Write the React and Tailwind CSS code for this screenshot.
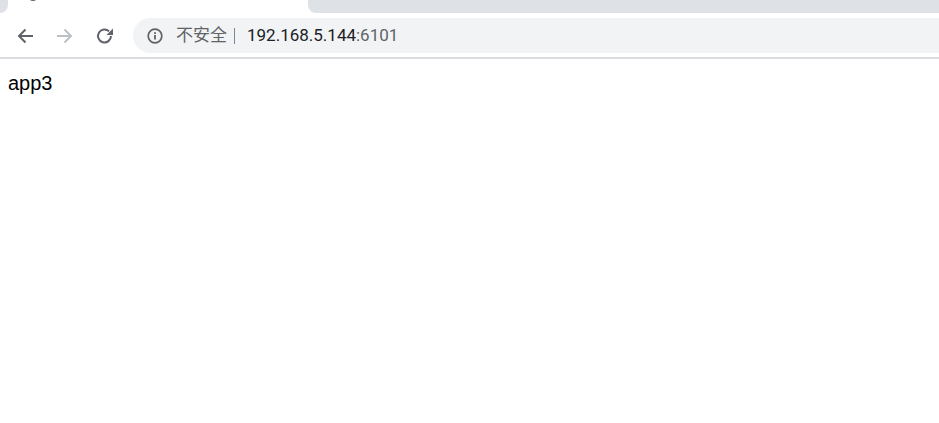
import React from "react";

const cjk = { fontFamily: '"Liberation Sans", "Noto Sans CJK SC", sans-serif' };

export default function App() {
  return (
    <div className="w-[939px] h-[423px] bg-white overflow-hidden font-['Roboto','Noto_Sans_CJK_SC',sans-serif]">
      <div className="flex h-[13px] bg-white">
        <div className="w-[8px] h-full bg-[#dee1e6] rounded-br-[8px]" />
        <div className="w-[300px] h-full relative">
          <div className="absolute left-[21px] top-[-7px] w-[8px] h-[8px] rounded-full bg-[#5f6368]" />
        </div>
        <div className="flex-1 h-full bg-[#dee1e6] rounded-bl-[8px]" />
      </div>
      <div className="h-[46px] flex items-start pt-[5px] border-b-2 border-[#dadce0]">
        <button className="w-[16px] h-[16px] ml-[17px] mt-[10px] shrink-0">
          <svg width="16" height="16" viewBox="0 0 16 16" fill="none" stroke="#5f6368" strokeWidth="2"><path d="M16 8H2M8.5 1.5 2 8l6.500 6.500" /></svg>
        </button>
        <button className="w-[16px] h-[16px] ml-[24px] mt-[10px] shrink-0">
          <svg width="16" height="16" viewBox="0 0 16 16" fill="none" stroke="#bdc1c6" strokeWidth="2"><path d="M0 8h14M7.500 1.500 14 8l-6.500 6.500" /></svg>
        </button>
        <button className="w-[18px] h-[18px] ml-[23px] mt-[9px] shrink-0">
          <svg width="18" height="18" viewBox="0 0 18 18" fill="none"><path d="M15 9a6.500 6.500 0 1 1-1.900-4.600" stroke="#5f6368" strokeWidth="2" /><path d="M17 1.500V8h-6.500z" fill="#5f6368" /></svg>
        </button>
        <div className="flex-1 h-[35px] ml-[19px] bg-[#f1f3f4] rounded-l-[18px] flex items-center pl-[14px] text-[17px]">
          <svg width="16" height="16" viewBox="0 0 16 16" fill="none" className="shrink-0"><circle cx="8" cy="8" r="6.800" stroke="#5f6368" strokeWidth="1.700" /><rect x="7.100" y="7" width="1.800" height="4.500" fill="#5f6368" /><rect x="7.100" y="4.200" width="1.800" height="1.800" fill="#5f6368" /></svg>
          <span className="ml-[13px] text-[#5f6368] whitespace-nowrap" style={cjk}>不安全</span>
          <span className="w-px h-[16px] bg-[#80868b] ml-[7px]" />
          <span className="ml-[12px] text-[#202124] whitespace-nowrap">192.168.5.144<span className="text-[#5f6368]">:6101</span></span>
        </div>
      </div>
      <p className="pl-[8px] pt-[12px] text-[20px] leading-[24px] text-black font-['Liberation_Sans',sans-serif]">app3</p>
    </div>
  );
}
